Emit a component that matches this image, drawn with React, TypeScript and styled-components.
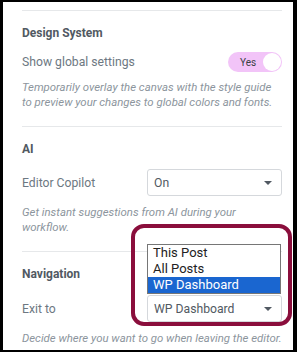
import styled, { createGlobalStyle } from "styled-components";

const Global = createGlobalStyle`
  html, body {
    margin: 0;
    padding: 0;
    background: #fff;
  }
  body {
    font-family: Roboto, "Liberation Sans", sans-serif;
  }
`;

const Frame = styled.div`
  box-sizing: border-box;
  width: 297px;
  height: 352px;
  border: solid #000;
  border-width: 2px 4px 2px 3px;
  padding: 8px 11px 0 19px;
  overflow: hidden;
`;

const Section = styled.div`
  border-top: 1px solid #e6e8ea;
  padding: 14px 0 16px;
`;

const Title = styled.div`
  font-size: 12px;
  line-height: 16px;
  font-weight: 700;
  color: #515962;
`;

const Row = styled.div<{ $gap: number }>`
  position: relative;
  display: flex;
  align-items: center;
  justify-content: space-between;
  margin-top: ${({ $gap }) => $gap}px;
`;

const Label = styled.span`
  font-size: 12.2px;
  color: #6d7882;
`;

const Help = styled.div<{ $gap: number }>`
  margin-top: ${({ $gap }) => $gap}px;
  font-size: 11.4px;
  line-height: 15px;
  font-style: italic;
  color: #8c959d;
`;

const Toggle = styled.div`
  width: 54px;
  height: 20px;
  border-radius: 10px;
  background: #f2c4f8;
  display: flex;
  align-items: center;
  justify-content: space-between;
  box-sizing: border-box;
  padding-left: 12px;
  font-size: 10px;
  color: #3a3f45;
`;

const Knob = styled.span`
  width: 18px;
  height: 18px;
  margin-right: 1px;
  border-radius: 50%;
  background: #fff;
`;

const SelectWrap = styled.div`
  position: relative;
  width: 135px;
`;

const Select = styled.div`
  box-sizing: border-box;
  height: 27px;
  border: 1px solid #d5d8dc;
  border-radius: 3px;
  display: flex;
  align-items: center;
  justify-content: space-between;
  padding: 0 9px 0 6px;
  font-size: 12.2px;
  color: #515962;
`;

const Caret = styled.span`
  width: 0;
  height: 0;
  border-left: 4px solid transparent;
  border-right: 4px solid transparent;
  border-top: 4px solid #515962;
`;

const Popup = styled.div`
  position: absolute;
  left: 0;
  right: 1px;
  bottom: calc(100% + 1px);
  border: 1px solid #767676;
  background: #fff;
  box-sizing: border-box;
`;

const Option = styled.div<{ $active?: boolean }>`
  height: 16px;
  line-height: 16px;
  padding-left: 5px;
  font-size: 13px;
  color: ${({ $active }) => ($active ? "#fff" : "#222")};
  background: ${({ $active }) => ($active ? "#1a66d0" : "transparent")};
`;

const Highlight = styled.div`
  position: absolute;
  left: -16px;
  right: -10px;
  top: -71px;
  bottom: -4px;
  border: 4px solid #8a0e3c;
  border-radius: 13px;
  pointer-events: none;
`;

export default function App() {
  return (
    <>
      <Global />
      <Frame>
        <Section>
          <Title>Design System</Title>
          <Row $gap={11}>
            <Label>Show global settings</Label>
            <Toggle>
              Yes
              <Knob />
            </Toggle>
          </Row>
          <Help $gap={8}>
            Temporarily overlay the canvas with the style guide to preview your changes to global colors and fonts.
          </Help>
        </Section>
        <Section>
          <Title>AI</Title>
          <Row $gap={12}>
            <Label>Editor Copilot</Label>
            <SelectWrap>
              <Select>
                On
                <Caret />
              </Select>
            </SelectWrap>
          </Row>
          <Help $gap={9}>Get instant suggestions from AI during your workflow.</Help>
        </Section>
        <Section>
          <Title>Navigation</Title>
          <Row $gap={13}>
            <Label>Exit to</Label>
            <SelectWrap>
              <Popup>
                <Option>This Post</Option>
                <Option>All Posts</Option>
                <Option $active>WP Dashboard</Option>
              </Popup>
              <Select>
                WP Dashboard
                <Caret />
              </Select>
              <Highlight />
            </SelectWrap>
          </Row>
          <Help $gap={9}>Decide where you want to go when leaving the editor.</Help>
        </Section>
      </Frame>
    </>
  );
}
